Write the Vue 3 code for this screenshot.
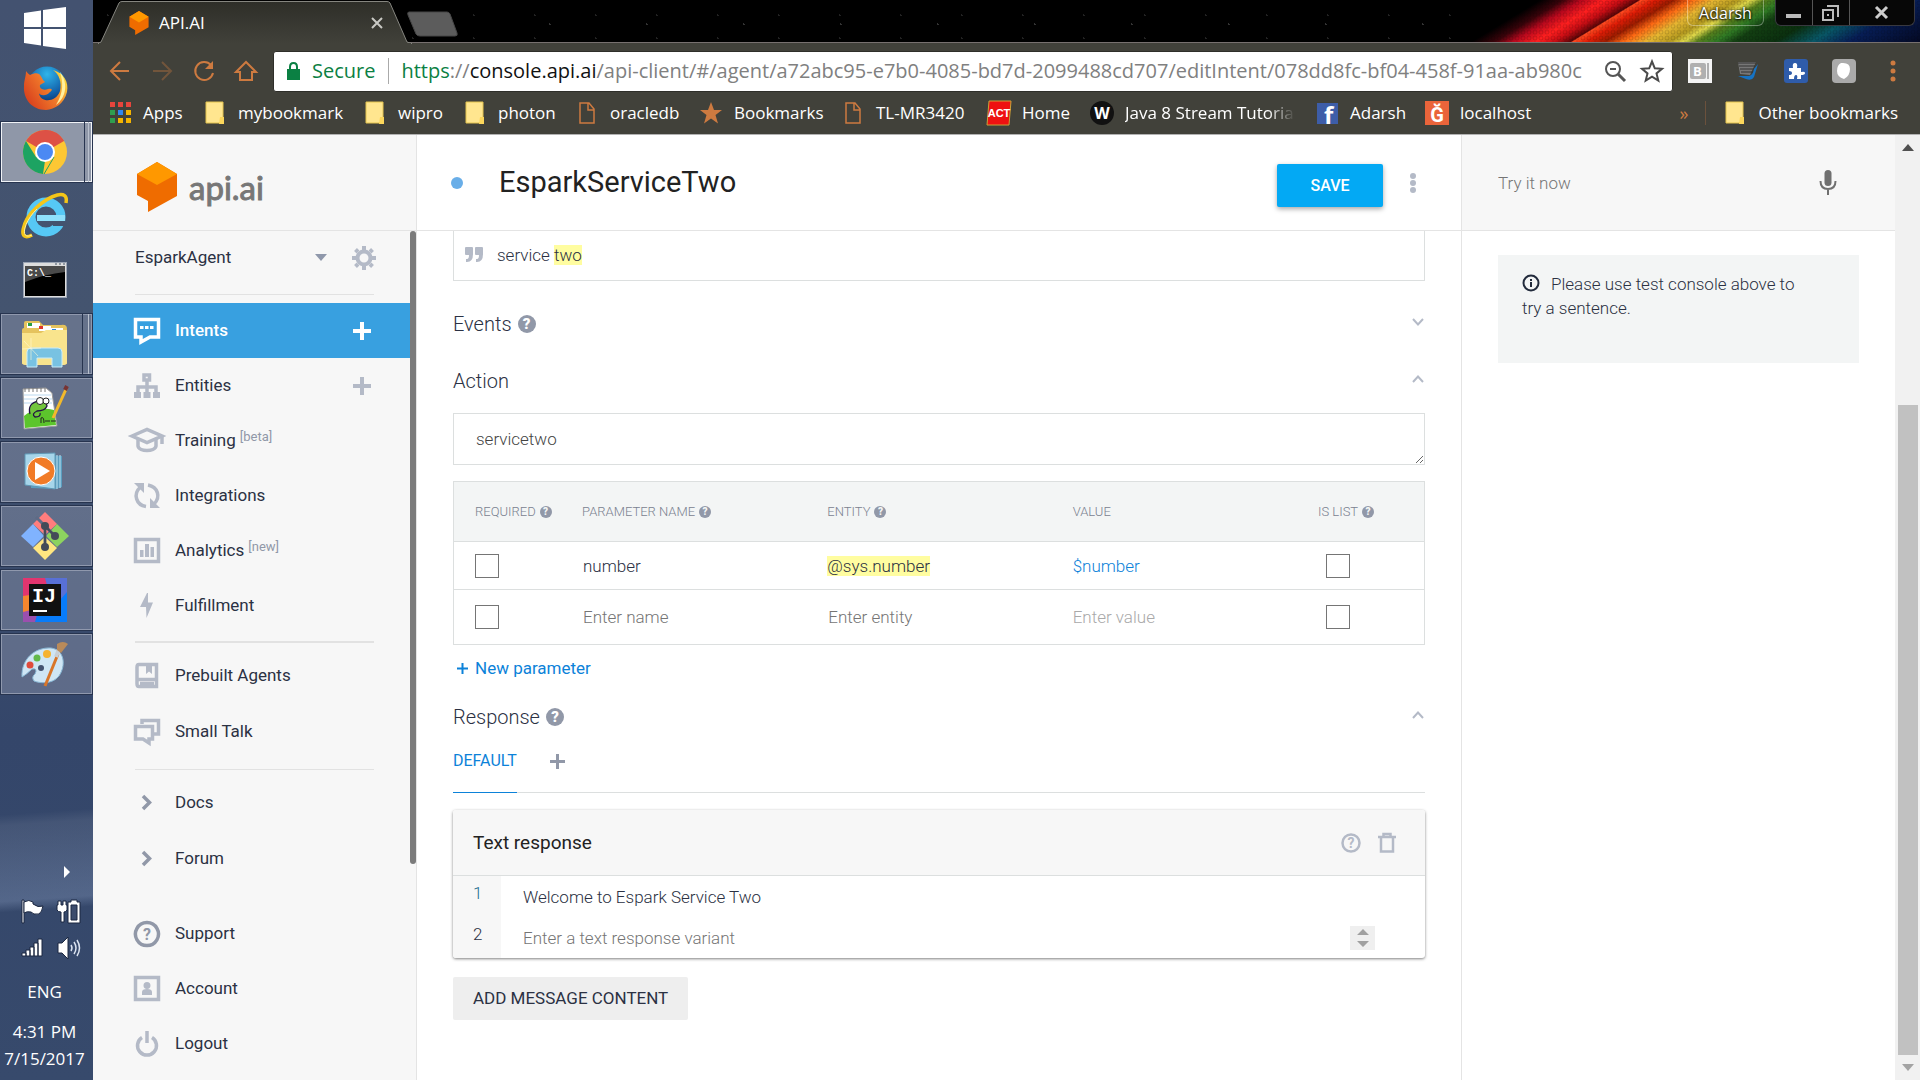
<script setup>
import { ref } from 'vue'

const agent = ref('EsparkAgent')
const agents = ['EsparkAgent']
const action = ref('servicetwo')

const icons = {
  intents: { line: ['M1.5 1.5H24.5V19H16L7 24V19H1.5Z'], fill: ['M6 8h3.5v3H6zM11 8h3.5v3H11zM16 8h3.5v3H16z'] },
  entities: { line: ['M10 2H15.500V7H10Z', 'M13 8V20M4 20V14H22V20'], fill: ['M0 19h7v6H0zM9.500 19h7v6h-7zM19 19h7v6h-7z'] },
  training: { line: ['M-2 8L13 1.500 28 8 13 14.500Z', 'M28 8V16', 'M4 11V18C5 24 21 24 22 18V11'], fill: [] },
  integrations: { line: ['M12 23.500C2 22 -1 11 6 4.500', 'M14 2C24 4 27 14 20 21'], fill: ['M0 0H10V10Z', 'M26 25H16V15Z'] },
  analytics: { line: ['M1.500 1.500H24.500V23.500H1.500Z'], fill: ['M6 12h3.500v7H6zM11 6h4v13h-4zM16.500 9H20v10h-3.500z'] },
  fulfillment: { line: [], fill: ['M13 0L6 14H12L12.500 25L19 9.500H14V0Z'] },
  prebuilt: { line: ['M5 1.500H22.500V23.500H5Q3 23.500 3 21V4Q3 1.500 5 1.500Z', 'M3 16.500H22', 'M6 20.500H20'], fill: ['M12 2H18V11L15 8.500L12 11Z'] },
  smalltalk: { line: ['M8 5V1.500H24.500V15H20', 'M1.500 7.500H18.500V20H15V24L9 20H1.500Z'], fill: [] },
  chevron: { line: ['M9 6L15.500 12.500L9 19'], fill: [] },
  support: { line: ['M13 1.500A11.500 11.500 0 1 1 12.900 1.500Z'], fill: [], mark: true },
  account: { line: ['M1.500 1.500H24.500V23.500H1.500Z'], fill: ['M13 6a3.300 3.300 0 0 1 0 7a3.300 3.300 0 0 1 0-7M8 19v-3q0-3 5-3q5 0 5 3v3z'] },
  logout: { line: ['M8 6.500A9.500 9.500 0 1 0 18 6.500', 'M13 0V12'], fill: [] }
}

const menu = [
  { icon: 'intents', label: 'Intents', add: true, active: true },
  { icon: 'entities', label: 'Entities', add: true },
  { icon: 'training', label: 'Training', note: '[beta]' },
  { icon: 'integrations', label: 'Integrations' },
  { icon: 'analytics', label: 'Analytics', note: '[new]' },
  { icon: 'fulfillment', label: 'Fulfillment' },
  { rule: 'thick' },
  { icon: 'prebuilt', label: 'Prebuilt Agents', tall: true },
  { icon: 'smalltalk', label: 'Small Talk', tall: true },
  { rule: 'thin' },
  { icon: 'chevron', label: 'Docs', tall: true, dark: true },
  { icon: 'chevron', label: 'Forum', tall: true, dark: true },
  { rule: 'blank' },
  { icon: 'support', label: 'Support', dark: true },
  { icon: 'account', label: 'Account' },
  { icon: 'logout', label: 'Logout' }
]

const bookmarks = [
  { kind: 'apps', label: 'Apps', w: 40 },
  { kind: 'folder', label: 'mybookmark', w: 105 },
  { kind: 'folder', label: 'wipro', w: 45 },
  { kind: 'folder', label: 'photon', w: 57 },
  { kind: 'page', label: 'oracledb', w: 69 },
  { kind: 'star', label: 'Bookmarks', w: 87 },
  { kind: 'page', label: 'TL-MR3420', w: 91 },
  { kind: 'act', label: 'Home', w: 48 },
  { kind: 'w', label: 'Java 8 Stream Tutoria', w: 170, fade: true },
  { kind: 'fb', label: 'Adarsh', w: 55 },
  { kind: 'g', label: 'localhost', w: 71 }
]

const appDots = ['#e8453c', '#e8453c', '#e8453c', '#2f9e4f', '#2f86f0', '#f5b400', '#2f9e4f', '#f5b400', '#f5b400']

const rows = ref([
  { name: 'number', entity: '@sys.number', value: '$number' },
  { name: '', entity: '', value: '' }
])
const responses = ref(['Welcome to Espark Service Two', ''])
</script>

<template>
  <div class="desktop">
    <aside class="taskbar">
      <button class="task start" aria-label="Start">
        <svg width="42" height="42" viewBox="0 0 42 42" fill="#fff"><path d="M0 6L17 3.500V20H0zM19 3L42 0V20H19zM0 22H17V38.500L0 36zM19 22H42V42L19 39z" /></svg>
      </button>
      <button class="task" aria-label="Firefox">
        <svg width="46" height="46" viewBox="0 0 46 46">
          <defs>
            <radialGradient id="ffb" cx=".5" cy=".2" r=".8"><stop offset="0" stop-color="#2fb5ea" /><stop offset=".6" stop-color="#1464ad" /><stop offset="1" stop-color="#0a2b66" /></radialGradient>
            <linearGradient id="ffo" x1="0" x2="1" y1=".8" y2=".2"><stop offset="0" stop-color="#d63a1c" /><stop offset=".55" stop-color="#f0792a" /><stop offset="1" stop-color="#fde23d" /></linearGradient>
          </defs>
          <circle cx="25" cy="21" r="19.500" fill="url(#ffb)" />
          <path d="M4 6C5 7 6 9 8 10C12 8 15 8 17 9C20 12 21 15 21 15L23 17L18 20C17 23 21 26 26 24C30 23 31 25 28 27C24 32 17 30 17 28C18 38 34 38 38 26C40 17 37 9 31 5C42 8 47 17 45 27C42 39 33 44 24 45C10 45 1 34 2 21C2 15 4 12 4 6Z" fill="url(#ffo)" />
          <path d="M38 7C46 17 45 32 34 40C42 27 41 17 38 7Z" fill="#fff1a0" />
        </svg>
      </button>
      <button class="task open focus double" aria-label="Chrome">
        <svg width="46" height="46" viewBox="0 0 46 46">
          <circle cx="23" cy="23" r="22" fill="#fdc734" />
          <path d="M23 23L4 12A22 22 0 0 1 42 12Z" fill="#dd5145" />
          <path d="M23 12H42A22 22 0 0 0 23 1Z" fill="#dd5145" />
          <path d="M4 12L14 28L23 32L21 45A22 22 0 0 1 4 12Z" fill="#1da362" />
          <path d="M22 45L32 28" stroke="#1da362" stroke-width="1" />
          <circle cx="23" cy="23" r="10" fill="#fff" /><circle cx="23" cy="23" r="8" fill="#4b89f3" />
        </svg>
      </button>
      <button class="task" aria-label="Internet Explorer">
        <svg width="48" height="48" viewBox="0 0 48 48">
          <circle cx="25" cy="25" r="15" fill="none" stroke="#56c8f5" stroke-width="9" />
          <path d="M16 26H44" stroke="#8fe0fb" stroke-width="6" />
          <path d="M31 29H46V34H32Z" fill="#43536f" />
          <path d="M11 43C-4 51 1 29 15 16C29 3 48 -4 45 11" fill="none" stroke="#f5c518" stroke-width="3.500" />
          <path d="M11 43C-2 49 3 29 16 17" fill="none" stroke="#fff0a0" stroke-width="1" />
        </svg>
      </button>
      <button class="task" aria-label="Command Prompt">
        <svg width="44" height="36" viewBox="0 0 44 36">
          <rect x=".5" y=".5" width="43" height="35" fill="#ddd" stroke="#9aa4b4" /><rect x="2" y="4" width="40" height="30" fill="#000" />
          <path d="M2 4H42V10Q22 12 2 20Z" fill="#4a4a4a" /><path d="M32 2h2M36 2h2M40 2h2" stroke="#456" />
          <text x="4" y="14" class="cmd">C:\_</text>
        </svg>
      </button>
      <button class="task open triple" aria-label="File Explorer">
        <svg width="48" height="48" viewBox="0 0 48 48">
          <path d="M3 3Q3 1 5 1H18L22 5H40Q46 4 46 9V44H1V10Q1 8 3 8Z" fill="#e5c35d" />
          <path d="M6 3h13v5H6zM18 6h12v5H18zM30 8h12v5H30z" fill="#fff" />
          <path d="M7 3h4v3H7z" fill="#2a9d45" /><path d="M18 6h4v3h-4z" fill="#e0392c" /><path d="M31 9h4v3h-4z" fill="#2c86d8" />
          <path d="M1 13H20L25 10H46V42Q46 45 43 45H4Q1 45 1 42Z" fill="#f9e48d" />
          <path d="M6 47V32Q6 28 10 28H37Q41 28 41 32V47H31V38H16V47Z" fill="#78c2e2" stroke="#c8ecfa" />
          <path d="M1 29L20 28M10 18V40M3 21L17 36" stroke="#fff9d5" stroke-opacity=".6" />
        </svg>
      </button>
      <button class="task open" aria-label="Notepad++">
        <svg width="48" height="46" viewBox="0 0 48 46">
          <path d="M2 4L25 3L31 8L36 41L3 44Z" fill="#fff" stroke="#999" /><path d="M3 10H30M3 14H31M3 18H31" stroke="#b9d8ef" />
          <path d="M3 31Q15 21 33 25L35 40L4 43Z" fill="#5cc52c" />
          <path d="M4 3v4M8 3v4M12 3v4M16 3v4M20 3v4M24 3v4" stroke="#777" />
          <path d="M9 29Q6 18 18 16Q26 17 26 21Q24 26 16 26Q10 29 14 32Q20 32 19 28" fill="#72c53c" stroke="#214" stroke-width="1.300" />
          <circle cx="19" cy="16" r="3.500" fill="#fff" stroke="#222" /><circle cx="25" cy="16" r="3" fill="#fff" stroke="#222" /><path d="M20 38V33q3-2 3 5M24 36h5M30 36h5" stroke="#222" fill="none" />
          <path d="M46 2L32 33" stroke="#f2b92b" stroke-width="3" /><path d="M46 1L44 5" stroke="#733" stroke-width="4" />
        </svg>
      </button>
      <button class="task open" aria-label="Media Player">
        <svg width="44" height="42" viewBox="0 0 44 42">
          <path d="M8 3L39 5V36L33 38L8 37Z" fill="#5a9dbf" /><path d="M34 4V38M37 4V37" stroke="#bde2f2" />
          <path d="M2 3L32 2V38L2 34Z" fill="#a6d5ea" stroke="#5f98b5" /><circle cx="18" cy="20" r="14" fill="#f17b27" stroke="#fff" /><path d="M12 11L27 20L12 29Z" fill="#fff" />
        </svg>
      </button>
      <button class="task open" aria-label="Git">
        <svg width="48" height="48" viewBox="0 0 48 48">
          <path d="M24 0L36 12L24 23L12 12Z" fill="#ff7d7d" /><path d="M12 12L23 24L12 35L0 24Z" fill="#80b3ff" />
          <path d="M36 12L48 24L36 35L25 24Z" fill="#8dd35f" /><path d="M24 25L36 36L24 48L12 36Z" fill="#ffe680" />
          <path d="M15 5L24 14V34M24 14L34 24" stroke="#5e6b86" stroke-width="3" fill="none" />
          <circle cx="24" cy="14" r="4" fill="#444b58" /><circle cx="34" cy="24" r="4" fill="#444b58" /><circle cx="24" cy="35" r="4" fill="#444b58" /><path d="M24 14V35M25 15L34 24" stroke="#444b58" stroke-width="2" />
        </svg>
      </button>
      <button class="task open" aria-label="IntelliJ IDEA">
        <svg width="44" height="44" viewBox="0 0 44 44">
          <rect width="44" height="44" fill="#087cfa" /><path d="M0 0H30L10 44H0Z" fill="#e2356f" /><path d="M22 0H44V14L30 30Z" fill="#5870d6" /><path d="M0 18L7 17L6 38L0 34Z" fill="#f5862e" /><path d="M0 34L16 30L12 44H0Z" fill="#9b4fae" />
          <rect x="6" y="6" width="32" height="32" fill="#111" /><rect x="10" y="32" width="14" height="2" fill="#fff" /><text x="9" y="24" class="ij">IJ</text>
        </svg>
      </button>
      <button class="task open" aria-label="Paint">
        <svg width="48" height="46" viewBox="0 0 48 46">
          <path d="M1 36C0 18 14 6 30 7C44 9 45 25 38 35C31 44 18 42 13 40Q10 36 14 33Q17 27 11 28Q6 33 1 36Z" fill="#cfe6f5" stroke="#88b6d4" />
          <circle cx="9" cy="24" r="3.500" fill="#df4b3c" /><circle cx="16" cy="17" r="3.500" fill="#62b94b" /><circle cx="26" cy="13" r="4" fill="#f5b331" /><circle cx="20" cy="27" r="3" fill="#435270" />
          <path d="M37 13L24 45" stroke="#d8762a" stroke-width="3" /><path d="M38 8L35 16" stroke="#c9d0d6" stroke-width="4" /><path d="M36 3Q42 -1 47 3L40 12L36 9Z" fill="#b98a5a" />
        </svg>
      </button>
      <div class="tray">
        <div class="tray-arrow"><svg width="8" height="14" viewBox="0 0 8 14" fill="#fff"><path d="M1 1L7 7L1 13Z" /></svg></div>
        <div class="tray-icons">
          <svg width="24" height="26" viewBox="0 0 24 26" fill="#fff" stroke="#1b2740"><path d="M1 1H3V24H1Z" /><path d="M3 3Q8 0 12 3V5Q17 9 22 7Q21 13 18 15Q12 16 10 13Q6 12 3 14Z" /></svg>
          <svg width="24" height="26" viewBox="0 0 24 26" fill="#fff" stroke="#1b2740"><path d="M1 2h3v4h2V2h3v4h1v5q-1 2-3 2v10H4V13q-3 0-4-2V6h1Z" /><path d="M11 3h3V1h6v2h3V24H11Z" /><path d="M14 6h6v15h-6z" fill="#3c4c6c" /></svg>
          <svg width="24" height="20" viewBox="0 0 24 20" fill="#fff" stroke="#1b2740"><path d="M1 15h4v3H1zM5 12h4v6H5zM9 9h4v9H9zM13 5h4v13h-4zM17 1h4v17h-4z" /></svg>
          <svg width="24" height="24" viewBox="0 0 24 24" fill="#fff" stroke="#1b2740"><path d="M1 7H5L11 1V23L5 17H1Z" /><path d="M14 9q2 3 0 6M17 6q4 6 0 12M20 4q5 8 0 16" fill="none" stroke="#dbe3f0" stroke-width="1.500" /></svg>
        </div>
        <div class="lang">ENG</div>
        <div class="clock">4:31 PM<br>7/15/2017</div>
      </div>
    </aside>

    <section class="browser">
      <header class="titlebar">
        <svg class="aurora" width="460" height="43" viewBox="0 0 460 43" preserveAspectRatio="none">
          <defs>
            <linearGradient id="au" gradientUnits="userSpaceOnUse" x1="80" x2="540" y1="0" y2="0" gradientTransform="skewX(-58)">
              <stop offset="0" stop-color="#000" /><stop offset=".05" stop-color="#3a030a" /><stop offset=".09" stop-color="#b8081d" /><stop offset=".14" stop-color="#ff1f1f" /><stop offset=".18" stop-color="#c80d14" />
              <stop offset=".215" stop-color="#5a0508" /><stop offset=".22" stop-color="#ff4a20" /><stop offset=".25" stop-color="#e01c06" /><stop offset=".29" stop-color="#9c1c00" /><stop offset=".33" stop-color="#ff6a14" /><stop offset=".38" stop-color="#e6b732" /><stop offset=".43" stop-color="#b59a20" />
              <stop offset=".46" stop-color="#dfd84a" /><stop offset=".49" stop-color="#557d1c" /><stop offset=".53" stop-color="#2f7a24" /><stop offset=".57" stop-color="#133f12" /><stop offset=".66" stop-color="#0b300f" /><stop offset=".74" stop-color="#085766" /><stop offset=".82" stop-color="#071d55" /><stop offset="1" stop-color="#03061c" />
            </linearGradient>
            <pattern id="hex" width="6" height="6" patternUnits="userSpaceOnUse"><circle cx="3" cy="3" r="2" fill="none" stroke="#000" stroke-opacity=".16" /></pattern>
          </defs>
          <rect width="460" height="43" fill="url(#au)" /><rect width="460" height="43" fill="url(#hex)" />
        </svg>
        <div class="tab">
          <svg class="tab-shape" width="314" height="44" viewBox="0 0 314 44" preserveAspectRatio="none">
            <defs><linearGradient id="tabg" x2="0" y2="1"><stop offset="0" stop-color="#2e2e28" /><stop offset="1" stop-color="#41413a" /></linearGradient></defs>
            <path d="M0 43.500L3 42L21 3Q22 1.500 24 1.500H289Q291 1.500 292 3L309 42L314 43.500Z" fill="url(#tabg)" stroke="#85857f" /><path d="M1 44H313" stroke="#41413a" stroke-width="2" />
          </svg>
          <svg class="favicon" width="20" height="24" viewBox="0 0 40 50"><path d="M0 12L20 0L40 12V34L12 50V40L0 33Z" fill="#ef6c00" /><path d="M0 12L20 0L40 12L20 24Z" fill="#ff9800" /></svg>
          <span class="tab-title">API.AI</span>
          <button class="tab-close" aria-label="Close tab"><svg width="12" height="12" viewBox="0 0 12 12"><path d="M1 1L11 11M11 1L1 11" stroke="#c9c9c4" stroke-width="2" /></svg></button>
        </div>
        <button class="new-tab" aria-label="New tab"><svg width="52" height="26" viewBox="0 0 52 26"><path d="M2 1H40Q42 1 43 3L50 22Q51 25 48 25H13Q10 25 9 23L1 4Q0 1 2 1Z" fill="#5c5c5c" stroke="#474747" /></svg></button>
        <div class="caption">
          <span class="user">Adarsh</span>
          <div class="win">
            <button aria-label="Minimize"><svg width="16" height="16" viewBox="0 0 16 16"><rect y="9" width="15" height="4" fill="#bbb" /></svg></button>
            <button aria-label="Restore"><svg width="18" height="18" viewBox="0 0 18 18" fill="none" stroke="#bbb" stroke-width="2"><path d="M1 6h10v10H1z" /><path d="M5 2h11v11" /><path d="M5 11h2" /></svg></button>
            <button class="wide" aria-label="Close"><svg width="14" height="14" viewBox="0 0 14 14"><path d="M1 1L12 12M12 1L1 12" stroke="#ccc" stroke-width="3" /></svg></button>
          </div>
        </div>
      </header>

      <div class="toolbar">
        <button aria-label="Back"><svg width="22" height="22" viewBox="0 0 22 22" class="nav"><path d="M20 11H2M11 2L2 11L11 20" /></svg></button>
        <button aria-label="Forward"><svg width="22" height="22" viewBox="0 0 22 22" class="nav faded"><path d="M2 11H20M11 2L20 11L11 20" /></svg></button>
        <button aria-label="Reload"><svg width="22" height="22" viewBox="0 0 22 22" class="nav"><path d="M18 5A9 9 0 1 0 20 13" /><path d="M20 1V9H12Z" fill="#cd7a40" stroke="none" /></svg></button>
        <button aria-label="Home"><svg width="22" height="22" viewBox="0 0 22 22" class="nav"><path d="M1 12L11 2L21 12H17V20H5V12Z" /></svg></button>
        <div class="omnibox">
          <svg width="13" height="18" viewBox="0 0 13 18"><path d="M0 7H13V18H0Z" fill="#0b8043" /><path d="M3 8V5Q3 1 6.500 1Q10 1 10 5V8" fill="none" stroke="#0b8043" stroke-width="2" /></svg>
          <span class="secure">Secure</span>
          <span class="url"><b>https</b>://<i>console.api.ai</i>/api-client/#/agent/a72abc95-e7b0-4085-bd7d-2099488cd707/editIntent/078dd8fc-bf04-458f-91aa-ab980c</span>
          <button aria-label="Zoom"><svg width="22" height="22" viewBox="0 0 22 22" fill="none" stroke="#555" stroke-width="2"><circle cx="9" cy="9" r="7" /><path d="M14 14L21 21" stroke-width="3" /><path d="M6 9h6" /></svg></button>
          <button aria-label="Bookmark this page"><svg width="24" height="24" viewBox="0 0 24 24" fill="none" stroke="#4a4a4a" stroke-width="2"><path d="M12 2.500L14.800 9.300L22 9.800L16.500 14.400L18.300 21.500L12 17.600L5.700 21.500L7.500 14.400L2 9.800L9.200 9.300Z" /></svg></button>
        </div>
        <div class="extensions">
          <button aria-label="Extension B"><svg width="24" height="24" viewBox="0 0 24 24"><rect width="24" height="24" fill="#f4f4f4" /><rect x="2" y="4" width="16" height="16" rx="2" fill="#b0b0b0" /><path d="M20 4v16" stroke="#b0b0b0" stroke-width="2" /><text x="5" y="17" class="ext-b">B</text></svg></button>
          <button aria-label="Extension notes"><svg width="24" height="24" viewBox="0 0 24 24"><path d="M2 3H20L14 16L4 15Z" fill="#777" /><path d="M2 4H20M3 7H19M4 10H18M5 13H17" stroke="#333" stroke-width="1" /><path d="M22 5L18 18Q16 22 10 20L2 17L13 17Q17 16 18 10Z" fill="#1673c4" /></svg></button>
          <button aria-label="Extension puzzle"><svg width="24" height="24" viewBox="0 0 24 24"><rect width="24" height="24" rx="3" fill="#2f5caa" /><path d="M5 9h4q-1-5 2-5t2 5h4v4q4-1 4 1t-4 2v4h-4q1-4-1-4t-2 4H5v-4q3 0 3-2t-3-2z" fill="#fff" /></svg></button>
          <button aria-label="Extension shape"><svg width="24" height="24" viewBox="0 0 24 24"><rect width="24" height="24" rx="4" fill="#aaa" /><path d="M9 4Q18 3 18 10Q18 17 12 20Q5 18 5 12Q5 6 9 4Z" fill="#fff" /></svg></button>
          <button aria-label="Menu"><svg width="6" height="22" viewBox="0 0 6 22" fill="#cd7a40"><circle cx="3" cy="3" r="2.500" /><circle cx="3" cy="11" r="2.500" /><circle cx="3" cy="19" r="2.500" /></svg></button>
        </div>
      </div>

      <nav class="bookmarks">
        <a v-for="(b, i) in bookmarks" :key="i" href="#" class="bm">
          <svg width="24" height="24" viewBox="0 0 24 24">
            <template v-if="b.kind === 'apps'"><rect v-for="(c, n) in appDots" :key="n" :x="2 + (n % 3) * 8" :y="1 + Math.floor(n / 3) * 8" width="5" height="5" :fill="c" /></template>
            <template v-else-if="b.kind === 'folder'"><path d="M3 1H20V22H3Z" fill="#ffe68f" stroke="#e3c34f" /><path d="M17 16h4v7h-5z" fill="#fbd65b" /></template>
            <path v-else-if="b.kind === 'page'" d="M5 2H14L19 8V22H5ZM13 2V9H19" fill="none" stroke="#cd7a40" stroke-width="1.500" />
            <path v-else-if="b.kind === 'star'" d="M12 1L15 9H23L16.500 14L19 22.500L12 17.500L5 22.500L7.500 14L1 9H9Z" fill="#cd7a40" />
            <template v-else-if="b.kind === 'act'"><path d="M2 0H24L22 24H0Z" fill="#e11" stroke="#c9a338" /><text x="12" y="16" class="act">ACT</text></template>
            <template v-else-if="b.kind === 'w'"><circle cx="12" cy="12" r="12" fill="#111" /><text x="12" y="18" class="wlogo">W</text></template>
            <template v-else-if="b.kind === 'fb'"><rect x="2" y="2" width="21" height="21" fill="#3d5da8" /><text x="9" y="23" class="fb">f</text></template>
            <template v-else><rect width="24" height="24" fill="#ea643a" /><text x="12" y="21" class="glogo">Ğ</text></template>
          </svg>
          <span :class="{ fade: b.fade }" :style="{ width: b.w + 'px' }">{{ b.label }}</span>
        </a>
        <button class="more">»</button>
        <a href="#" class="bm other">
          <svg width="24" height="24" viewBox="0 0 24 24"><path d="M3 1H20V22H3Z" fill="#ffe68f" stroke="#e3c34f" /><path d="M17 16h4v7h-5z" fill="#fbd65b" /></svg>
          <span>Other bookmarks</span>
        </a>
      </nav>

      <div class="app">
        <aside class="sidebar">
          <div class="brand">
            <svg width="40" height="50" viewBox="0 0 40 50"><path d="M0 12L20 0L40 12V34L11 50V39L0 33Z" fill="#ef6c00" /><path d="M0 12L20 0L40 12L20 23Z" fill="#ff9800" /></svg>
            <span>api.ai</span>
          </div>
          <div class="side-body">
            <div class="agent">
              <select v-model="agent" aria-label="Agent"><option v-for="a in agents" :key="a">{{ a }}</option></select>
              <svg class="caret" width="12" height="7" viewBox="0 0 12 7"><path d="M0 0H12L6 7Z" fill="#8f98ab" /></svg>
              <button aria-label="Agent settings">
                <svg width="26" height="26" viewBox="0 0 26 26" stroke="#b4bac7" fill="none"><circle cx="13" cy="13" r="6.500" stroke-width="4" /><path d="M13 1V5M13 21V25M1 13H5M21 13H25M4.500 4.500L7 7M19 19L21.500 21.500M4.500 21.500L7 19M19 7L21.500 4.500" stroke-width="4" /></svg>
              </button>
            </div>
            <hr class="first">
            <template v-for="(m, i) in menu" :key="i">
              <hr v-if="m.rule" :class="m.rule">
              <div v-else class="item" :class="{ active: m.active, tall: m.tall, dark: m.dark }">
                <a href="#">
                  <svg width="26" height="26" viewBox="0 0 26 26">
                    <path v-for="d in icons[m.icon].line" :key="d" :d="d" fill="none" stroke="currentColor" stroke-width="3.500" />
                    <path v-for="d in icons[m.icon].fill" :key="d" :d="d" fill="currentColor" />
                    <text v-if="icons[m.icon].mark" x="13" y="19" class="mark">?</text>
                  </svg>
                  <span>{{ m.label }}<sup v-if="m.note">{{ m.note }}</sup></span>
                </a>
                <button v-if="m.add" :aria-label="'Create ' + m.label"><svg width="18" height="18" viewBox="0 0 18 18"><path d="M9 0V18M0 9H18" stroke="currentColor" stroke-width="4" /></svg></button>
              </div>
            </template>
            <div class="side-scroll"></div>
          </div>
        </aside>

        <main class="main">
          <header class="head">
            <span class="dot"></span>
            <h1>EsparkServiceTwo</h1>
            <button class="save">SAVE</button>
            <button class="kebab" aria-label="More"><svg width="6" height="20" viewBox="0 0 6 20" fill="#b4bac7"><circle cx="3" cy="3" r="3" /><circle cx="3" cy="10" r="3" /><circle cx="3" cy="17" r="3" /></svg></button>
          </header>
          <div class="content">
            <div class="phrase">
              <svg width="18" height="15" viewBox="0 0 18 15" fill="#b4bac7"><path d="M0 1q0-1 1-1h6q1 0 1 1v6q0 8-6 8H1v-3h1q2 0 2-4H1q-1 0-1-1zM10 1q0-1 1-1h6q1 0 1 1v6q0 8-6 8h-1v-3h1q2 0 2-4h-3q-1 0-1-1z" /></svg>
              <p>service <mark>two</mark></p>
            </div>
            <div class="section events">
              <h2>Events</h2><span class="help">?</span>
              <button aria-label="Expand events"><svg width="12" height="8" viewBox="0 0 12 8"><path d="M1 1L6 6.500L11 1" /></svg></button>
            </div>
            <div class="section action">
              <h2>Action</h2>
              <button aria-label="Collapse action"><svg width="12" height="8" viewBox="0 0 12 8"><path d="M1 7L6 1.500L11 7" /></svg></button>
            </div>
            <textarea v-model="action" class="action-box" aria-label="Action name" rows="1"></textarea>
            <table>
              <colgroup><col class="c1"><col><col><col><col class="c5"></colgroup>
              <thead>
                <tr>
                  <th>REQUIRED<span class="help small">?</span></th>
                  <th>PARAMETER NAME<span class="help small">?</span></th>
                  <th>ENTITY<span class="help small">?</span></th>
                  <th>VALUE</th>
                  <th>IS LIST<span class="help small">?</span></th>
                </tr>
              </thead>
              <tbody>
                <tr v-for="(r, i) in rows" :key="i">
                  <td><input type="checkbox" :aria-label="'Required ' + (i + 1)"></td>
                  <td><input v-model="r.name" type="text" placeholder="Enter name" :aria-label="'Parameter name ' + (i + 1)"></td>
                  <td><mark v-if="r.entity">{{ r.entity }}</mark><input v-else v-model="r.entity" type="text" placeholder="Enter entity" aria-label="Entity"></td>
                  <td><input v-model="r.value" type="text" class="value" placeholder="Enter value" :aria-label="'Value ' + (i + 1)"></td>
                  <td class="list"><input type="checkbox" :aria-label="'Is list ' + (i + 1)"></td>
                </tr>
              </tbody>
            </table>
            <button class="new-param"><svg width="11" height="11" viewBox="0 0 11 11"><path d="M5.500 0V11M0 5.500H11" stroke="#0c82d9" stroke-width="2" /></svg>New parameter</button>
            <div class="section response">
              <h2>Response</h2><span class="help">?</span>
              <button aria-label="Collapse response"><svg width="12" height="8" viewBox="0 0 12 8"><path d="M1 7L6 1.500L11 7" /></svg></button>
            </div>
            <div class="tabs">
              <button class="current">DEFAULT</button>
              <button class="plus" aria-label="Add platform"><svg width="15" height="15" viewBox="0 0 15 15"><path d="M7.500 0V15M0 7.500H15" stroke="#9198a8" stroke-width="3" /></svg></button>
            </div>
            <div class="card">
              <div class="card-head">
                <h3>Text response</h3>
                <button aria-label="Help"><svg width="20" height="20" viewBox="0 0 20 20"><circle cx="10" cy="10" r="8.500" fill="none" stroke="#b4bac7" stroke-width="2.500" /><text x="10" y="15" class="mark small-mark">?</text></svg></button>
                <button aria-label="Delete"><svg width="18" height="20" viewBox="0 0 18 20" fill="none" stroke="#b4bac7" stroke-width="2.500"><path d="M3 5V18.500H15V5M0 4H18M5.500 4V1H12.500V4" /></svg></button>
              </div>
              <div v-for="(t, i) in responses" :key="i" class="variant">
                <span class="num" :class="{ first: i === 0 }">{{ i + 1 }}</span>
                <input v-model="responses[i]" type="text" placeholder="Enter a text response variant" :aria-label="'Text response ' + (i + 1)">
                <span v-if="i === 1" class="spin"><svg width="12" height="18" viewBox="0 0 12 18" fill="#a0a0a0"><path d="M0 6L6 0L12 6ZM0 12H12L6 18Z" /></svg></span>
              </div>
            </div>
            <button class="add-msg">ADD MESSAGE CONTENT</button>
          </div>
        </main>

        <aside class="console">
          <header class="try">
            <input type="text" placeholder="Try it now" aria-label="Try it now">
            <button aria-label="Speak"><svg width="18" height="25" viewBox="0 0 18 25"><rect x="5.500" width="7" height="16" rx="3.500" fill="#707070" /><path d="M1.500 11Q1.500 19 9 19Q16.500 19 16.500 11M9 19V25" fill="none" stroke="#707070" stroke-width="2" /></svg></button>
          </header>
          <p class="info"><svg width="18" height="18" viewBox="0 0 18 18"><circle cx="9" cy="9" r="7.500" fill="none" stroke="#222b3c" stroke-width="2" /><path d="M9 8V13M9 5V7" stroke="#222b3c" stroke-width="2" /></svg>Please use test console above to try a sentence.</p>
        </aside>

        <div class="scrollbar">
          <svg width="12" height="8" viewBox="0 0 12 8"><path d="M0 7L6 0L12 7Z" fill="#505050" /></svg>
          <div class="track"><div class="thumb"></div></div>
          <svg width="12" height="8" viewBox="0 0 12 8"><path d="M0 1H12L6 8Z" fill="#a3a3a3" /></svg>
        </div>
      </div>
    </section>
  </div>
</template>

<style>
body { margin: 0; }
</style>

<style scoped>
* { box-sizing: border-box; }
button { font: inherit; background: none; border: 0; padding: 0; margin: 0; color: inherit; display: flex; align-items: center; justify-content: center; cursor: pointer; }
svg { display: block; flex: none; overflow: visible; }
a { color: inherit; text-decoration: none; }
input, textarea, select { font: inherit; color: inherit; border: 0; background: none; outline: 0; margin: 0; }
h1, h2, h3 { margin: 0; font-weight: 400; }
p { margin: 0; }
.desktop { display: flex; min-height: 100vh; font-family: Roboto, "Liberation Sans", sans-serif; font-size: 17px; line-height: 24px; color: #2b3143; background: #fff; }

.taskbar { flex: none; width: 93px; display: flex; flex-direction: column; gap: 4px; color: #fff; font-family: "Open Sans", "Noto Sans", sans-serif; background: linear-gradient(176deg, transparent 75%, rgba(255,255,255,.08) 76%, rgba(170,190,225,.26) 83%, transparent 84%), linear-gradient(#435270, #44546f 30%, #34466a 68%, #374a6c); }
.task { height: 60px; flex: none; position: relative; margin: 0 1px; padding-right: 3px; }
.task.start { height: 56px; margin-bottom: -2px; }
.task.open { background: rgba(150,158,178,.42); border: 1px solid #8f98ad; outline: 1px solid #27344f; }
.task.focus { background: #8f97a8; border-color: #f0f2f6; }
.task.double::after, .task.triple::after { content: ""; position: absolute; top: -1px; bottom: -1px; right: 2px; width: 3px; border-left: 1px solid #27344f; border-right: 1px solid #b9c0cd; }
.task.triple::after { width: 5px; }
.cmd { font: 700 10px "Liberation Mono", monospace; fill: #fff; }
.ij { font: 700 20px "Liberation Mono", monospace; fill: #fff; }
.tray { margin-top: auto; display: flex; flex-direction: column; align-items: center; padding: 0 4px 8px 0; text-align: center; line-height: 27px; }
.tray-arrow { align-self: flex-end; margin-right: 18px; }
.tray-icons { display: grid; grid-template-columns: 24px 24px; column-gap: 12px; row-gap: 11px; margin: 20px 0 18px 12px; align-items: center; }
.lang { margin-bottom: 13px; }

.browser { flex: 1; min-width: 0; display: flex; flex-direction: column; }
.titlebar { height: 43px; flex: none; position: relative; display: flex; color: #fff; font-family: "Open Sans", "Noto Sans", sans-serif; background-color: #000; background-image: radial-gradient(circle, #333 1px, transparent 1px), radial-gradient(circle, #222 1px, transparent 1px); background-size: 97px 31px, 61px 23px; background-position: 20px 9px, 45px 4px; border-bottom: 1px solid #77706f; }
.aurora { position: absolute; right: 0; top: 0; height: 42px; overflow: hidden; }
.tab { position: relative; width: 314px; margin-left: 5px; display: flex; align-items: center; padding: 4px 29px 0 31px; }
.tab-shape { position: absolute; left: 0; top: 0; }
.favicon, .tab-title, .tab-close { position: relative; }
.tab-title { margin-left: 10px; flex: 1; font-size: 17px; }
.new-tab { align-self: flex-start; margin: 11px 0 0 -5px; position: relative; }
.caption { position: relative; margin-left: auto; margin-right: 5px; display: flex; gap: 11px; height: 26px; }
.user { width: 77px; text-align: center; font-size: 16px; line-height: 27px; border: 1px solid rgba(255,255,255,.35); border-top: 0; border-radius: 0 0 6px 6px; text-shadow: 0 0 3px #000, 0 1px 2px #000; }
.win { display: flex; background: #070707; border: 1px solid #38383f; border-top: 0; border-radius: 0 0 6px 6px; }
.win button { width: 37px; border-right: 1px solid #555; }
.win .wide { width: 64px; border: 0; }

.toolbar { background: #41413a; height: 53px; flex: none; display: flex; align-items: center; gap: 20px; padding: 3px 24px 0 16px; }
.nav { fill: none; stroke: #cd7a40; stroke-width: 2; }
.faded { opacity: .35; }
.omnibox { flex: 1; min-width: 0; height: 41px; background: #fff; border: 1px solid #2e2e29; border-radius: 3px; display: flex; align-items: center; margin: 0 -5px 0 -4px; padding: 0 8px 0 13px; font-family: "Open Sans", "Noto Sans", sans-serif; font-size: 20px; line-height: 36px; }
.secure { color: #0b8043; margin-left: 12px; padding-right: 13px; border-right: 1px solid #aaa; line-height: 26px; }
.url { flex: 1; min-width: 0; overflow: hidden; white-space: nowrap; color: #808080; margin: 0 10px 0 12px; }
.url b { font-weight: 400; color: #0b8043; }
.url i { font-style: normal; color: #111; }
.omnibox button + button { margin-left: 14px; }
.extensions { display: flex; align-items: center; gap: 24px; }
.extensions button:last-child { margin-left: 10px; }
.ext-b { font: 700 13px "Open Sans", sans-serif; fill: #fff; }

.bookmarks { height: 39px; flex: none; background: #41413a; border-bottom: 1px solid #b2b2b2; display: flex; align-items: center; gap: 20px; padding: 0 22px 4px 15px; color: #fff; font-family: "Open Sans", "Noto Sans", sans-serif; font-size: 17px; white-space: nowrap; }
.bm { display: flex; align-items: center; gap: 11px; flex: none; }
.fade { -webkit-mask-image: linear-gradient(90deg, #000 84%, transparent); mask-image: linear-gradient(90deg, #000 84%, transparent); }
.more { margin-left: auto; color: #cd7a40; font-size: 18px; }
.other { border-left: 1px solid #6b513c; padding-left: 17px; margin-left: -3px; }
.act { font: 700 11px "Liberation Sans", sans-serif; fill: #fff; text-anchor: middle; }
.wlogo { font: 700 16px "Open Sans", sans-serif; fill: #fff; text-anchor: middle; }
.fb { font: 700 24px "Open Sans", sans-serif; fill: #fff; }
.glogo { font: 700 20px Roboto, sans-serif; fill: #fff; text-anchor: middle; }

.app { flex: 1; display: flex; min-height: 0; }
.sidebar { width: 324px; flex: none; background: #f7f7f7; border-right: 1px solid #e4e4e4; }
.brand { height: 96px; border-bottom: 1px solid #e4e4e4; display: flex; align-items: center; gap: 12px; padding: 9px 0 0 44px; color: #777; font: 33px/50px Lato, sans-serif; -webkit-text-stroke: 1px #777; }
.side-body { position: relative; padding-right: 6px; }
.side-scroll { position: absolute; right: 0; top: 0; width: 6px; height: 633px; border-radius: 3px; background: #7b7b7b; }
.agent { height: 53px; display: flex; align-items: center; padding: 0 33px 0 42px; position: relative; }
.agent select { flex: 1; appearance: none; padding: 0 0 2px; height: 26px; }
.agent .caret { margin-right: 24px; pointer-events: none; }
hr { border: 0; height: 1px; background: #e2e2e2; margin: 9px 36px 5px 42px; }
hr.first { margin: 10px 36px 8px 42px; }
hr.thick { height: 2px; margin-top: 8px; }
hr.blank { visibility: hidden; margin: 9px 0; }
.item { height: 55px; display: flex; align-items: center; padding: 0 39px 0 41px; color: #b4bac7; }
.item.tall { height: 56px; }
.item.dark { color: #9198a8; }
.item a { flex: 1; display: flex; align-items: center; gap: 15px; }
.item a span { color: #2b3143; padding-bottom: 2px; }
.item.active { background: #38a0e0; color: #fff; font-weight: 500; }
.item.active a span { color: #fff; }
sup { font-size: 13px; line-height: 0; color: #9198a8; margin-left: 4px; vertical-align: 5px; }
.mark { font: 700 16px Roboto, sans-serif; fill: currentColor; text-anchor: middle; }
.small-mark { font-size: 14px; }

.main { flex: 1; min-width: 0; }
.head { height: 96px; border-bottom: 1px solid #e4e4e4; display: flex; align-items: center; padding: 0 45px 0 34px; }
.dot { width: 12px; height: 12px; border-radius: 50%; background: #69aee8; }
h1 { font-size: 29px; line-height: 38px; padding-bottom: 2px; margin-left: 36px; flex: 1; color: #222; }
.save { width: 106px; height: 43px; margin-top: 6px; background: #03a9f4; color: #fff; font-size: 16px; font-weight: 500; border-radius: 2px; box-shadow: 0 2px 5px rgba(0,0,0,.35); }
.kebab { margin-left: 27px; }
.content { padding: 0 36px 60px; font-weight: 300; }
.phrase { height: 50px; border: 1px solid #dcdfdf; border-top: 0; display: flex; align-items: center; gap: 14px; padding: 0 0 2px 11px; }
mark { background: #fffda0; color: inherit; }
.section { height: 30px; display: flex; align-items: center; }
.section button { margin-left: auto; width: 12px; margin-right: 1px; padding-bottom: 4px; }
.section button path { fill: none; stroke: #b4bac7; stroke-width: 2; }
h2 { font-size: 20px; line-height: 30px; font-weight: 300; }
.help { width: 18px; height: 18px; border-radius: 50%; background: #9198a8; color: #fff; font-size: 15px; line-height: 18px; font-weight: 900; text-align: center; margin-left: 6px; }
.help.small { display: inline-block; width: 12px; height: 12px; font-size: 10px; line-height: 12px; margin-left: 4px; vertical-align: 1px; color: #f3f5f5; }
.events { margin-top: 28px; }
.action { margin-top: 27px; }
.action-box { display: block; width: 100%; height: 52px; min-height: 52px; margin-top: 17px; border: 1px solid #dcdfdf; padding: 13px 22px; resize: vertical; overflow: hidden; color: #444; }
table { width: 100%; margin-top: 16px; border: 1px solid #dcdfdf; border-collapse: separate; border-spacing: 0; table-layout: fixed; }
.c1 { width: 128px; }
.c5 { width: 106px; }
th { height: 60px; background: #f3f5f5; border-bottom: 1px solid #dcdfdf; padding: 0; text-align: left; font-size: 13px; font-weight: 300; color: #7a8190; white-space: nowrap; }
th:first-child, td:first-child { padding-left: 21px; }
td { height: 48px; padding: 0; border-bottom: 1px solid #dcdfdf; vertical-align: middle; }
tr:last-child td { height: 54px; border-bottom: 0; }
td mark { line-height: 20px; }
td input[type="text"] { width: 96%; height: 24px; padding: 0 1px; display: block; }
td input.value[type="text"] { padding: 0; }
input[type="checkbox"] { appearance: none; width: 24px; height: 24px; border: 1px solid #757575; display: block; background: #fff; }
td.list { padding-left: 8px; }
::placeholder { color: #757575; opacity: 1; }
.value { color: #0c82d9; }
.value::placeholder { color: #a9a9a9; }
.new-param { margin: 11px 0 0 4px; gap: 7px; color: #0c82d9; font-weight: 400; }
.response { margin-top: 22px; }
.tabs { margin-top: 13px; height: 48px; border-bottom: 1px solid #dcdfdf; display: flex; gap: 33px; }
.tabs button { align-items: flex-start; padding-top: 4px; height: 48px; }
.current { color: #0c82d9; border-bottom: 1px solid #0c82d9; font-weight: 400; font-size: 16px; }
.tabs .plus { padding-top: 9px; }
.card { margin-top: 17px; border-radius: 3px; box-shadow: 0 1px 3px rgba(0,0,0,.5); overflow: hidden; }
.card-head { height: 66px; background: #f7f7f7; border-bottom: 1px solid #dcdfdf; display: flex; align-items: center; gap: 17px; padding: 0 29px 0 20px; color: #b4bac7; }
h3 { font-size: 19px; flex: 1; color: #222; }
.variant { height: 41px; display: flex; align-items: center; }
.num { width: 48px; align-self: stretch; background: #f7f7f7; padding: 5px 0 0 20px; }
.num.first { color: #1c6f90; }
.variant input { flex: 1; padding: 0; margin-left: 22px; height: 24px; }
.spin { width: 25px; height: 24px; background: #efefef; display: flex; align-items: center; justify-content: center; margin-right: 50px; }
.add-msg { margin-top: 19px; height: 43px; padding: 0 20px 2px; background: #eee; border-radius: 2px; font-weight: 400; }

.console { width: 434px; flex: none; border-left: 1px solid #e4e4e4; }
.try { height: 96px; background: #f7f7f7; border-bottom: 1px solid #e4e4e4; display: flex; align-items: center; padding: 0 58px 0 36px; }
.try input { flex: 1; min-width: 0; padding: 0; font-weight: 300; }
.info { margin: 24px 36px 0; min-height: 108px; background: #f3f5f5; padding: 17px 60px 17px 24px; font-weight: 300; }
.info svg { display: inline-block; vertical-align: -2px; margin-right: 11px; }
.scrollbar { width: 25px; flex: none; background: #f1f1f1; display: flex; flex-direction: column; align-items: center; padding: 9px 0; }
.track { flex: 1; width: 20px; display: flex; flex-direction: column; justify-content: flex-end; padding: 0 0 8px; }
.thumb { height: 72%; background: #c1c1c1; }
</style>
